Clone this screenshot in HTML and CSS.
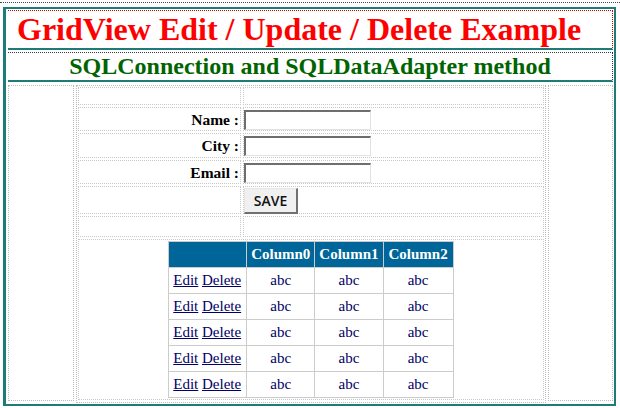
FILE: index.html
```html
<!DOCTYPE html>
<html lang="en">
<head>
    <meta charset="UTF-8">
    <title>GridView Edit / Update / Delete Example</title>
    <link rel="stylesheet" href="styles.css">
</head>
<body>
    <form class="page">
        <div class="frame">
            <div class="title">GridView Edit / Update / Delete Example</div>
            <div class="subtitle">SQLConnection and SQLDataAdapter method</div>
            <div class="content">
                <div class="side"></div>
                <div class="main">
                    <div class="entry">
                        <div class="cell"></div>
                        <div class="cell"></div>

                        <div class="cell label">Name :</div>
                        <div class="cell"><input type="text" class="textbox"></div>

                        <div class="cell label">City :</div>
                        <div class="cell"><input type="text" class="textbox"></div>

                        <div class="cell label">Email :</div>
                        <div class="cell"><input type="text" class="textbox"></div>

                        <div class="cell"></div>
                        <div class="cell"><button type="button" class="save">SAVE</button></div>

                        <div class="cell"></div>
                        <div class="cell"></div>

                        <div class="cell wide">
                            <table class="grid">
                                <tr class="head">
                                    <th>&nbsp;</th>
                                    <th>Column0</th>
                                    <th>Column1</th>
                                    <th>Column2</th>
                                </tr>
                                <tr>
                                    <td class="cmd"><a href="#">Edit</a> <a href="#">Delete</a></td>
                                    <td>abc</td><td>abc</td><td>abc</td>
                                </tr>
                                <tr>
                                    <td class="cmd"><a href="#">Edit</a> <a href="#">Delete</a></td>
                                    <td>abc</td><td>abc</td><td>abc</td>
                                </tr>
                                <tr>
                                    <td class="cmd"><a href="#">Edit</a> <a href="#">Delete</a></td>
                                    <td>abc</td><td>abc</td><td>abc</td>
                                </tr>
                                <tr>
                                    <td class="cmd"><a href="#">Edit</a> <a href="#">Delete</a></td>
                                    <td>abc</td><td>abc</td><td>abc</td>
                                </tr>
                                <tr>
                                    <td class="cmd"><a href="#">Edit</a> <a href="#">Delete</a></td>
                                    <td>abc</td><td>abc</td><td>abc</td>
                                </tr>
                            </table>
                        </div>
                    </div>
                </div>
                <div class="side"></div>
            </div>
        </div>
    </form>
</body>
</html>
```

FILE: styles.css
```css
body {
    margin: 0;
    background-color: #fff;
    font-family: "Liberation Serif", "Times New Roman", serif;
}
.page {
    margin: 2px 0 0 0;
    border-top: 1px dotted #445;
    padding: 4px 4px 0 3px;
}
.frame {
    border: 2px solid #1f7b78; /* teal outer table */
    border-left-width: 3px;
    padding: 1px 1px 0 2px;
    height: 399px;
    box-sizing: border-box;
}
.title {
    border-top: 1px dotted #c00;
    border-right: 1px dotted #c00;
    border-bottom: 2px solid #1f7b78;
    color: #f00;
    font-size: 32px;
    font-weight: bold;
    line-height: 37px;
    padding-left: 9px;
    white-space: nowrap;
}
.subtitle {
    margin-top: 2px;
    border-top: 1px dotted #334;
    border-right: 1px dotted #334;
    border-bottom: 2px solid #1f7b78;
    color: #006400;
    font-size: 24px;
    font-weight: bold;
    line-height: 27px;
    text-align: center;
    white-space: nowrap;
}
.content {
    display: grid;
    grid-template-columns: 66px 1fr 65px;
    gap: 2px;
    margin-top: 3px;
}
.side, .main {
    border: 1px dotted #bbb;
    height: 314px;
}
.main {
    padding: 1px;
}
.entry {
    display: grid;
    grid-template-columns: 163px 1fr;
    grid-template-rows: 18px 24px 25px 24px 28px 21px auto;
    gap: 2px;
}
.cell {
    border: 1px dotted #c8c8c8;
}
.label {
    text-align: right;
    font-size: 15.5px;
    font-weight: bold;
    line-height: 24px;
    padding-right: 1px;
}
.wide {
    grid-column: 1 / 3;
    display: flex;
    justify-content: center;
    padding-top: 1px;
    height: 158px;
}
.textbox {
    display: block;
    margin: 2px 0 0 0;
    width: 127px;
    height: 20px;
    box-sizing: border-box;
    border-top: 2px solid #6e6e6e;
    border-left: 2px solid #6e6e6e;
    border-right: 1px solid #e2e2e2;
    border-bottom: 1px solid #e2e2e2;
    padding: 0;
}
.save {
    display: block;
    margin: 1px 0 0 0;
    width: 54px;
    height: 26px;
    background-color: #f0f0f0;
    border-top: 1px solid #e6e6e6;
    border-left: 1px solid #e6e6e6;
    border-right: 2px solid #707070;
    border-bottom: 2px solid #707070;
    font-family: "Open Sans", "Liberation Sans", sans-serif;
    font-size: 14px;
    font-weight: 600;
    color: #111;
    padding: 0;
}
.grid {
    border-collapse: collapse;
    border: 1px solid #ccc;
    font-size: 15px;
    color: #006;
    align-self: flex-start;
}
.grid th, .grid td {
    border: 1px solid #ccc;
    padding: 4px;
    height: 17px;
    line-height: 17px;
    text-align: center;
}
.grid .head th {
    background-color: #006699;
    color: #fff;
    font-weight: bold;
}
.grid td.cmd {
    text-align: left;
    padding: 4px 5px 4px 4px;
}
.grid th:last-child, .grid td:last-child {
    padding-left: 5px;
    padding-right: 5px;
}
.grid a {
    color: #006;
}
```
